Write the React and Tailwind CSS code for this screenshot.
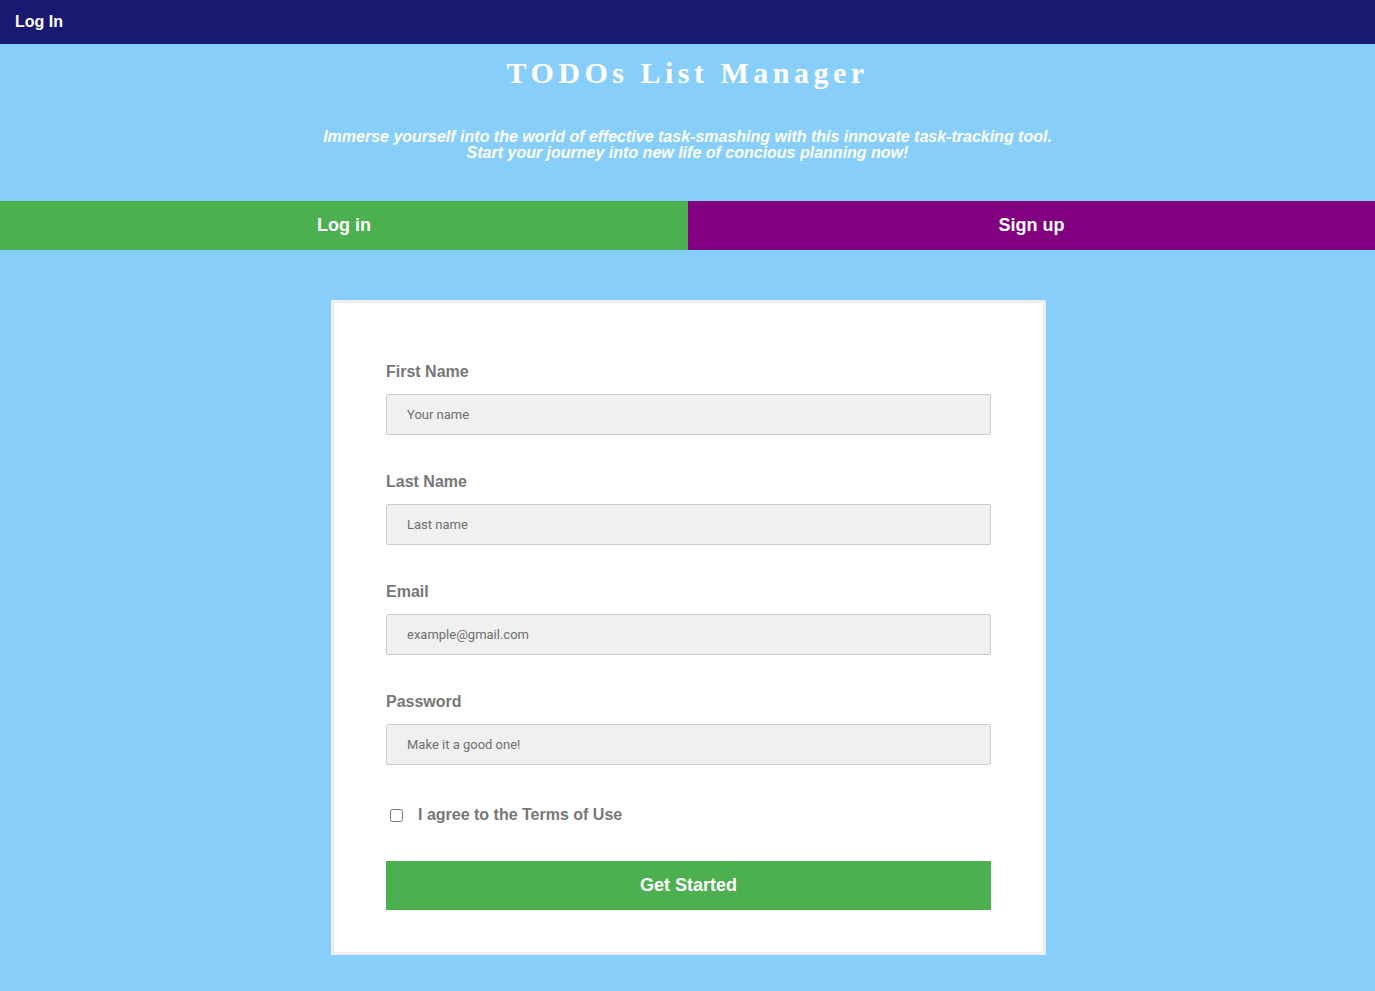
import React from 'react';

const Field = ({ label, placeholder, type = 'text' }) => (
  <div className="mb-[37px]">
    <label className="block mb-[12px] text-[16px] leading-[20px] font-bold text-[#777]">{label}</label>
    <input
      type={type}
      placeholder={placeholder}
      className="block w-full h-[41px] px-[20px] bg-[#f0f0f0] border border-[#ccc] rounded-[2px] text-[13px] text-[#555] placeholder:text-[#6f6f6f] font-['Roboto',sans-serif] outline-none"
    />
  </div>
);

export default function App() {
  return (
    <div className="min-h-[991px] bg-[#87cefa] font-['Liberation_Sans',Arial,sans-serif]">
      {/* top nav */}
      <nav className="h-[44px] bg-[#191970] flex items-center px-[15px]">
        <span className="text-white font-bold text-[16px]">Log In</span>
      </nav>

      {/* header */}
      <header className="h-[157px] flex flex-col items-center text-white text-center">
        <h1 className="mt-[9px] font-['Liberation_Serif',serif] font-bold text-[30px] leading-[40px] tracking-[4.5px]">
          TODOs List Manager
        </h1>
        <p className="mt-[36px] italic font-bold text-[16px] leading-[16px]">
          Immerse yourself into the world of effective task-smashing with this innovate task-tracking tool.
          <br />
          Start your journey into new life of concious planning now!
        </p>
      </header>

      {/* tabs */}
      <div className="flex h-[49px]">
        <button className="w-[688px] bg-[#4caf50] text-white font-bold text-[18px]">Log in</button>
        <button className="flex-1 bg-[#800080] text-white font-bold text-[18px]">Sign up</button>
      </div>

      {/* form card */}
      <div className="flex justify-center pt-[50px] pb-[36px] pl-[2px]">
        <form className="w-[715px] bg-white border-[3px] border-[#eeeeee] px-[52px] pt-[59px] pb-[42px]">
          <Field label="First Name" placeholder="Your name" />
          <Field label="Last Name" placeholder="Last name" />
          <Field label="Email" placeholder="example@gmail.com" type="email" />
          <Field label="Password" placeholder="Make it a good one!" type="password" />

          <label className="flex items-center h-[20px] mt-[40px] pl-[4px]">
            <input type="checkbox" className="w-[13px] h-[13px] m-0" />
            <span className="ml-[15px] text-[16px] font-bold text-[#777]">I agree to the Terms of Use</span>
          </label>

          <button
            type="button"
            className="mt-[36px] w-full h-[49px] bg-[#4caf50] text-white font-bold text-[18px]"
          >
            Get Started
          </button>
        </form>
      </div>
    </div>
  );
}
